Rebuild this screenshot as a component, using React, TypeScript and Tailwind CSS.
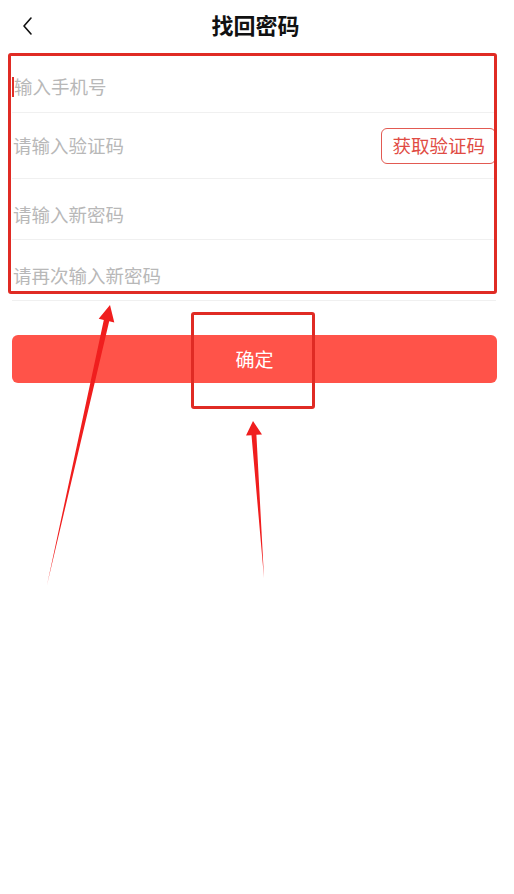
import React from 'react';

const fields = [
  { key: 'code', placeholder: '请输入验证码', rowClass: 'h-[66px] items-center', action: true },
  { key: 'pwd', placeholder: '请输入新密码', rowClass: 'h-[61px] items-center pt-[11px]' },
  { key: 'pwd2', placeholder: '请再次输入新密码', rowClass: 'h-[61px] items-center pt-[11px]' },
];

const App: React.FC = () => {
  return (
    <div
      className="relative min-h-[894px] w-full bg-white"
      style={{ fontFamily: '"Noto Sans CJK SC", "Noto Sans", sans-serif' }}
    >
      {/* header */}
      <div className="relative flex h-[52px] items-center justify-center">
        <button className="absolute left-[18px] top-[12px] p-1">
          <svg width="12" height="20" viewBox="0 0 12 20" fill="none">
            <polyline points="9,2 2,10 9,18" stroke="#111" strokeWidth="1.6" strokeLinecap="round" strokeLinejoin="round" />
          </svg>
        </button>
        <h1 className="pb-[4px] pr-[3px] text-[22px] font-bold leading-none text-[#111]">找回密码</h1>
      </div>

      {/* form */}
      <div className="ml-3 mr-[18px] mt-[10px]">
        <div className="flex h-[51px] items-center border-b border-[#f0f0f0]">
          <span className="h-[20px] w-[2px] bg-[#e0302a]" />
          <span className="text-[18.5px] text-[#b8b8b8]">输入手机号</span>
        </div>
        {fields.map((f) => (
          <div key={f.key} className={`flex justify-between border-b border-[#f0f0f0] ${f.rowClass}`}>
            <span className="pl-px text-[18.5px] text-[#b8b8b8]">{f.placeholder}</span>
            {f.action && (
              <button className="h-[36px] rounded-[6px] border border-[#e25a52] px-[10px] text-[18.5px] leading-none text-[#e04b43]">
                获取验证码
              </button>
            )}
          </div>
        ))}
      </div>

      <div className="ml-3 mr-[17px] mt-[34px]">
        <button className="flex h-[48px] w-full items-center justify-center rounded-[6px] bg-[#ff5349] text-[19px] text-white">
          确定
        </button>
      </div>

      {/* annotation overlay */}
      <div className="pointer-events-none absolute left-[8px] top-[53px] h-[241px] w-[489px] rounded-[3px] border-[3px] border-[#e02b24]" />
      <div className="pointer-events-none absolute left-[191px] top-[312px] h-[97px] w-[124px] rounded-[3px] border-[3px] border-[#e02b24]" />
      <svg className="pointer-events-none absolute left-0 top-0" width="514" height="894" viewBox="0 0 514 894">
        <polygon
          points="110,305 114.3,322.4 109.2,321.2 47,585 103.8,320 98.7,318.8"
          fill="#f01e1e"
        />
        <polygon
          points="253,421 262,434.4 256.4,434.8 264,578 251.5,435.2 246,435.6"
          fill="#f01e1e"
        />
      </svg>
    </div>
  );
};

export default App;
